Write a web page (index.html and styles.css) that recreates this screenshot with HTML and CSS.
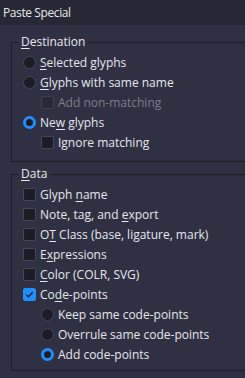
FILE: index.html
```html
<!DOCTYPE html>
<html lang="en">

<head>
    <meta charset="UTF-8">
    <meta name="viewport" content="width=device-width, initial-scale=1.0">
    <title>Paste Special</title>
    <link rel="stylesheet" href="styles.css">
</head>

<body>

    <header class="titlebar">Paste Special</header>

    <section class="dialog">
        <fieldset class="group group-dest">
            <legend><u>D</u>estination</legend>
            <div class="row"><span class="radio"></span><span><u>S</u>elected glyphs</span></div>
            <div class="row"><span class="radio"></span><span><u>G</u>lyphs with same name</span></div>
            <div class="row sub disabled"><span class="check"></span><span>Add non-matching</span></div>
            <div class="row"><span class="radio on"></span><span>Ne<u>w</u> glyphs</span></div>
            <div class="row sub"><span class="check"></span><span>Ignore matching</span></div>
        </fieldset>

        <fieldset class="group group-data">
            <legend><u>D</u>ata</legend>
            <div class="row"><span class="check"></span><span>Glyph <u>n</u>ame</span></div>
            <div class="row"><span class="check"></span><span>Note, tag, and <u>e</u>xport</span></div>
            <div class="row"><span class="check"></span><span>O<u>T</u> Class (base, ligature, mark)</span></div>
            <div class="row"><span class="check"></span><span>E<u>x</u>pressions</span></div>
            <div class="row"><span class="check"></span><span><u>C</u>olor (COLR, SVG)</span></div>
            <div class="row"><span class="check on">
                <svg width="13" height="13" viewBox="0 0 13 13"><path d="M3.2 6.6 L5.4 8.8 L9.8 4.2" fill="none" stroke="#1b1c26" stroke-width="1.3"/></svg>
            </span><span>Co<u>d</u>e-points</span></div>
            <div class="row sub"><span class="radio"></span><span>Keep same code-points</span></div>
            <div class="row sub"><span class="radio"></span><span>Overrule same code-points</span></div>
            <div class="row sub"><span class="radio on"></span><span>Add code-points</span></div>
        </fieldset>
    </section>

</body>

</html>
```
FILE: styles.css
```css
body {
    margin: 0;
    width: 245px;
    height: 378px;
    overflow: hidden;
    background-color: #2f3142;
    color: #e6e7ec;
    font-family: "Open Sans", "Noto Sans", sans-serif;
    font-size: 12px;
}

u {
    text-decoration-thickness: 1px;
    text-underline-offset: 2px;
}

.titlebar {
    height: 25px;
    line-height: 25px;
    padding-left: 3px;
    letter-spacing: -0.4px;
    background-color: #262833;
}

.dialog {
    padding-left: 11px;
}

.group {
    margin: 0;
    border: 1px solid #1d1e28;
    border-right: 0;
    padding: 2px 0 9px 11px;
}

.group-dest {
    margin-top: 9px;
}

.group-data {
    margin-top: 4px;
    padding-bottom: 6px;
}

legend {
    margin-left: -5px;
    padding: 0 3px;
    line-height: 16px;
}

.row {
    display: flex;
    align-items: center;
    gap: 4px;
    height: 20px;
}

.row.sub {
    padding-left: 18px;
}

.disabled {
    color: #7c7e8a;
}

.radio,
.check {
    box-sizing: border-box;
    width: 13px;
    height: 13px;
    background-color: #1b1c26;
    border: 1px solid #454759;
    flex: none;
}

.radio {
    border-radius: 50%;
}

.check {
    border-radius: 2px;
}

.disabled .check {
    background-color: #272935;
    border-color: #3e404e;
}

.radio.on {
    border: 3px solid #1e8fff;
}

.check.on {
    background-color: #1e8fff;
    border-color: #1e8fff;
}

.check.on svg {
    display: block;
    margin: -1px;
}
```
